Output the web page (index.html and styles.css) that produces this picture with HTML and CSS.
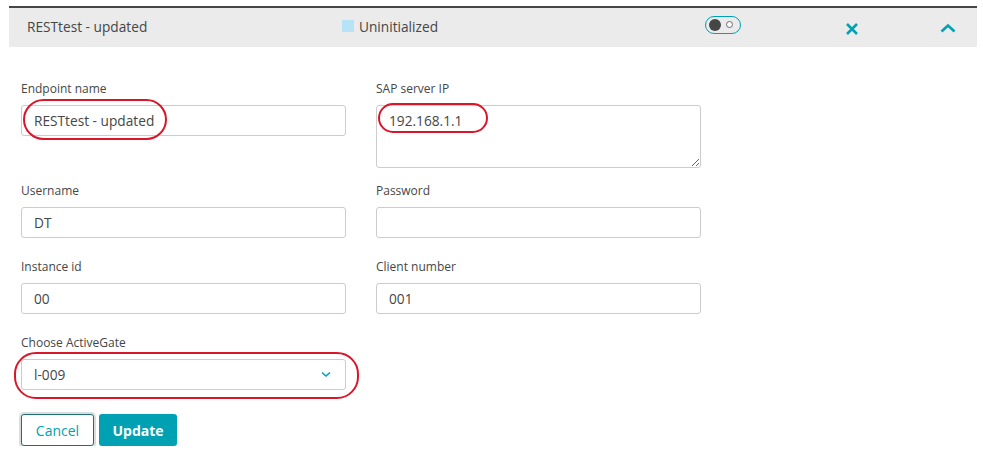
FILE: index.html
```html
<!DOCTYPE html>
<html lang="en">
<head>
<meta charset="utf-8">
<title>SAP endpoint</title>
<link rel="stylesheet" href="styles.css">
</head>
<body>
<div class="panel">
  <div class="panel-header">
    <div class="hdr-title">RESTtest - updated</div>
    <div class="hdr-status"><span class="status-square"></span>Uninitialized</div>
    <div class="hdr-toggle">
      <span class="toggle"><span class="knob"></span><span class="ring"></span></span>
    </div>
    <div class="hdr-close">
      <svg width="14" height="14" viewBox="0 0 14 14"><path d="M2 2 L12 12 M12 2 L2 12" stroke="#00a1b2" stroke-width="2.6" fill="none"/></svg>
    </div>
    <div class="hdr-collapse">
      <svg width="16" height="10" viewBox="0 0 16 10"><path d="M1.5 8.5 L8 2.5 L14.5 8.5" stroke="#00a1b2" stroke-width="2.6" fill="none"/></svg>
    </div>
  </div>

  <form class="form">
    <div class="field short">
      <label class="lbl">Endpoint name</label>
      <div class="ctrl">
        <input class="inp" type="text" value="RESTtest - updated">
        <span class="mark mark-name"></span>
      </div>
    </div>
    <div class="field tall">
      <label class="lbl">SAP server IP</label>
      <div class="ctrl">
        <textarea class="area">192.168.1.1</textarea>
        <span class="mark mark-ip"></span>
      </div>
    </div>
    <div class="field">
      <label class="lbl">Username</label>
      <div class="ctrl"><input class="inp" type="text" value="DT"></div>
    </div>
    <div class="field">
      <label class="lbl">Password</label>
      <div class="ctrl"><input class="inp" type="password" value=""></div>
    </div>
    <div class="field">
      <label class="lbl">Instance id</label>
      <div class="ctrl"><input class="inp" type="text" value="00"></div>
    </div>
    <div class="field">
      <label class="lbl">Client number</label>
      <div class="ctrl"><input class="inp" type="text" value="001"></div>
    </div>
    <div class="field">
      <label class="lbl">Choose ActiveGate</label>
      <div class="ctrl">
        <div class="select">
          <span>l-009</span>
          <svg width="10" height="7" viewBox="0 0 10 7"><path d="M1 1.5 L5 5 L9 1.5" stroke="#00a1b2" stroke-width="1.6" fill="none"/></svg>
        </div>
        <span class="mark mark-gate"></span>
      </div>
    </div>
  </form>

  <div class="actions">
    <button class="btn btn-cancel" type="button">Cancel</button>
    <button class="btn btn-update" type="button">Update</button>
  </div>
</div>
</body>
</html>
```

FILE: styles.css
```css
* { box-sizing: border-box; }

body {
  margin: 0;
  background: #ffffff;
  font-family: "Open Sans", "Liberation Sans", sans-serif;
  color: #454646;
}

.panel {
  padding-top: 6px;
}

.panel-header {
  margin-left: 9px;
  width: 968px;
  height: 41px;
  border-top: 2px solid #454646;
  background: #ebebeb;
  display: grid;
  grid-template-columns: 333px 363px 140px 95px 1fr;
  align-items: center;
  font-size: 13.7px;
}

.hdr-title { padding-left: 18px; margin-top: -2px; }

.hdr-status {
  display: flex;
  align-items: center;
  margin-top: -2px;
}

.status-square {
  width: 12px;
  height: 12px;
  background: #b7e3f7;
  margin-right: 5px;
  position: relative;
  top: -1px;
}

.hdr-toggle { display: flex; }

.toggle {
  width: 36px;
  height: 18px;
  border: 1.5px solid #00a1b2;
  border-radius: 9px;
  display: flex;
  align-items: center;
  padding: 0 3px;
  gap: 5px;
  margin-top: -6px;
}

.knob {
  width: 12px;
  height: 12px;
  border-radius: 50%;
  background: #454646;
}

.ring {
  width: 7px;
  height: 7px;
  border-radius: 50%;
  border: 1.2px solid #6a6a6a;
  background: #fff;
}

.hdr-close, .hdr-collapse { display: flex; }
.hdr-close svg { margin-top: 2px; }
.hdr-collapse svg { margin-top: 0; }

.form {
  margin-top: 34px;
  padding-left: 21px;
  display: grid;
  grid-template-columns: 325px 325px;
  column-gap: 30px;
  align-items: start;
}

.field { margin-bottom: 21px; }
.field.tall { margin-bottom: 15px; }

.lbl {
  display: block;
  font-size: 12px;
  line-height: 16px;
  margin-bottom: 8px;
  color: #454646;
}

.ctrl { position: relative; }

.inp, .area {
  display: block;
  width: 325px;
  border: 1px solid #cccccc;
  border-radius: 3px;
  font-family: "Open Sans", "Liberation Sans", sans-serif;
  font-size: 13.7px;
  color: #454646;
  background: #fff;
  outline: none;
}

.inp {
  height: 31px;
  padding: 0 12px;
}

.area {
  height: 63px;
  padding: 5px 12px;
  resize: vertical;
  margin: 0;
}

.select {
  width: 325px;
  height: 31px;
  border: 1px solid #cccccc;
  border-radius: 3px;
  display: flex;
  align-items: center;
  justify-content: space-between;
  padding: 0 14px 0 12px;
  font-size: 13.7px;
}

.mark {
  position: absolute;
  border: 2.5px solid #d9162a;
  border-radius: 999px;
  pointer-events: none;
}

.mark-name { left: 2px; top: -6px; width: 144px; height: 41px; }
.mark-ip { left: 2px; top: -2px; width: 110px; height: 30px; }
.mark-gate { left: -7px; top: -7px; width: 345px; height: 47px; border-radius: 22px; }

.actions {
  margin-top: 3px;
  padding-left: 21px;
  display: flex;
  gap: 5px;
}

.btn {
  height: 32px;
  border-radius: 3px;
  font-family: "Open Sans", "Liberation Sans", sans-serif;
  font-size: 14px;
  padding: 0;
  cursor: pointer;
}

.btn-cancel {
  width: 73px;
  background: #fff;
  color: #00a1b2;
  border: 1px solid #1b6f78;
  box-shadow: 0 0 0 2px #dcdcdc;
}

.btn-update {
  width: 78px;
  background: #00a1b2;
  color: #fff;
  border: none;
  font-weight: 700;
}
```
